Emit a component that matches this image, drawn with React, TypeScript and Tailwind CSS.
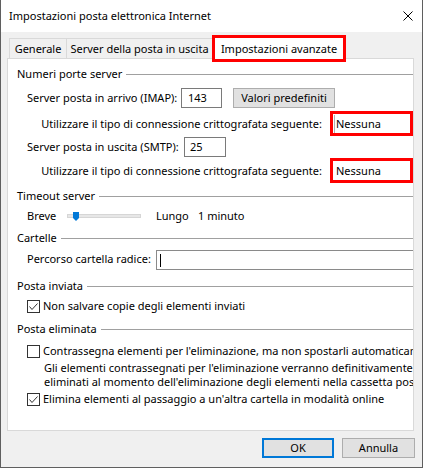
import React from 'react';

function GroupHeader({ title, className }: { title: string; className: string }) {
  return (
    <div className={`flex h-[20px] items-center pl-[9px] ${className}`}>
      <span className="whitespace-nowrap">{title}</span>
      <div className="ml-[4px] h-px flex-1 bg-[#a0a0a0]" />
    </div>
  );
}

function CheckBox({ checked }: { checked: boolean }) {
  return (
    <span className="flex h-[13px] w-[13px] shrink-0 items-center justify-center border border-[#333333] bg-white">
      {checked && (
        <svg width="11" height="11" viewBox="0 0 11 11">
          <path d="M1.5 5.5L4 8.5L9.5 2.5" fill="none" stroke="#333333" strokeWidth="1" />
        </svg>
      )}
    </span>
  );
}

function CheckRow({ checked, label, className }: { checked: boolean; label: string; className: string }) {
  return (
    <div className={`flex h-[20px] items-center whitespace-nowrap pl-[19px] ${className}`}>
      <CheckBox checked={checked} />
      <span className="ml-[3px]">{label}</span>
    </div>
  );
}

function Encryption({ className, caret }: { className: string; caret?: boolean }) {
  return (
    <div className={`flex h-[25px] items-center ${className}`}>
      <span className="w-[317px] whitespace-nowrap text-right">
        Utilizzare il tipo di connessione crittografata seguente:
      </span>
      <div className="relative z-10 ml-[8px] flex h-[25px] w-[83px] shrink-0 items-center border-[3px] border-[#ff0000] bg-white pl-[3px]">
        {caret && <div className="absolute left-[1px] top-[1px] h-[18px] w-px bg-[#b0b0b0]" />}
        Nessuna
      </div>
    </div>
  );
}

export default function App() {
  return (
    <div className="relative h-[468px] w-[423px] border-x border-b border-[#5f5f5f] bg-[#f0f0f0] font-['Noto_Sans',sans-serif] text-[11px] leading-[14px] text-black">
      {/* title bar */}
      <div className="flex h-[32px] items-center justify-between bg-white pl-[8px] pr-[9px]">
        <span>Impostazioni posta elettronica Internet</span>
        <svg width="10" height="10" viewBox="0 0 10 10">
          <path d="M0.5 0.5L9.5 9.5M9.5 0.5L0.5 9.5" stroke="#000" strokeWidth="1" />
        </svg>
      </div>

      {/* tabs */}
      <div className="ml-[8px] mt-[6px] flex h-[20px] items-end">
        <div className="flex h-[20px] w-[58px] items-center justify-center border-x border-t border-[#d9d9d9]">
          Generale
        </div>
        <div className="flex h-[20px] w-[146px] items-center justify-center border-r border-t border-[#d9d9d9] whitespace-nowrap">
          Server della posta in uscita
        </div>
        <div className="relative z-10 -mb-[4px] -ml-[1px] flex h-[27px] w-[134px] items-center justify-center border-[3px] border-[#ff0000] bg-white whitespace-nowrap">
          Impostazioni avanzate
        </div>
      </div>

      {/* tab panel */}
      <div className="ml-[6px] h-[373px] w-[407px] border border-[#d9d9d9] bg-white">
        <GroupHeader title="Numeri porte server" className="mt-[5px]" />

        <div className="mt-[4px] flex h-[20px] items-center pl-[19px]">
          <span className="w-[154px] whitespace-nowrap">Server posta in arrivo (IMAP):</span>
          <div className="flex h-[20px] w-[41px] items-center border border-[#7a7a7a] pl-[6px]">143</div>
          <button className="ml-[11px] h-[20px] w-[102px] border border-[#adadad] bg-[#e1e1e1]">
            Valori predefiniti
          </button>
        </div>

        <Encryption className="mt-[3px]" caret />

        <div className="mt-[1px] flex h-[20px] items-center pl-[19px]">
          <span className="w-[157px] whitespace-nowrap">Server posta in uscita (SMTP):</span>
          <div className="flex h-[20px] w-[42px] items-center border border-[#7a7a7a] pl-[5px]">25</div>
        </div>

        <Encryption className="mt-[1px]" />

        <GroupHeader title="Timeout server" className="mt-[3px]" />

        <div className="flex h-[20px] items-center pl-[19px]">
          <span className="w-[40px]">Breve</span>
          <div className="relative h-[4px] w-[74px] border border-[#d6d6d6] bg-[#e7e7e7]">
            <svg className="absolute left-[5px] top-[-3px]" width="6" height="9" viewBox="0 0 6 9">
              <path d="M0 0H6V6L3 9L0 6Z" fill="#0078d7" />
            </svg>
          </div>
          <span className="ml-[15px] w-[42px]">Lungo</span>
          <span>1 minuto</span>
        </div>

        <GroupHeader title="Cartelle" className="mt-[2px]" />

        <div className="mt-[2px] flex h-[20px] items-center overflow-hidden pl-[19px]">
          <span className="-mt-[3px] w-[129px] shrink-0 whitespace-nowrap">Percorso cartella radice:</span>
          <div className="flex h-[20px] w-[280px] shrink-0 items-center border border-[#8a8a8a] pl-[3px]">
            <div className="h-[13px] w-px bg-black" />
          </div>
        </div>

        <GroupHeader title="Posta inviata" className="mt-[6px]" />
        <CheckRow checked label="Non salvare copie degli elementi inviati" className="" />

        <GroupHeader title="Posta eliminata" className="mt-[3px]" />
        <CheckRow
          checked={false}
          label="Contrassegna elementi per l'eliminazione, ma non spostarli automaticam"
          className="mt-[2px] overflow-hidden"
        />
        <div className="overflow-hidden whitespace-nowrap pl-[36px]">
          <div className="flex h-[14px] items-center">
            Gli elementi contrassegnati per l'eliminazione verranno definitivamente
          </div>
          <div className="flex h-[14px] items-center">
            eliminati al momento dell'eliminazione degli elementi nella cassetta pos
          </div>
        </div>
        <CheckRow
          checked
          label="Elimina elementi al passaggio a un'altra cartella in modalità online"
          className=""
        />
      </div>

      {/* buttons */}
      <div className="mt-[7px] flex justify-end gap-[8px] pr-[7px]">
        <button className="h-[20px] w-[72px] border-2 border-[#0078d7] bg-[#e1e1e1]">OK</button>
        <button className="h-[20px] w-[73px] border border-[#adadad] bg-[#e1e1e1]">Annulla</button>
      </div>
    </div>
  );
}
